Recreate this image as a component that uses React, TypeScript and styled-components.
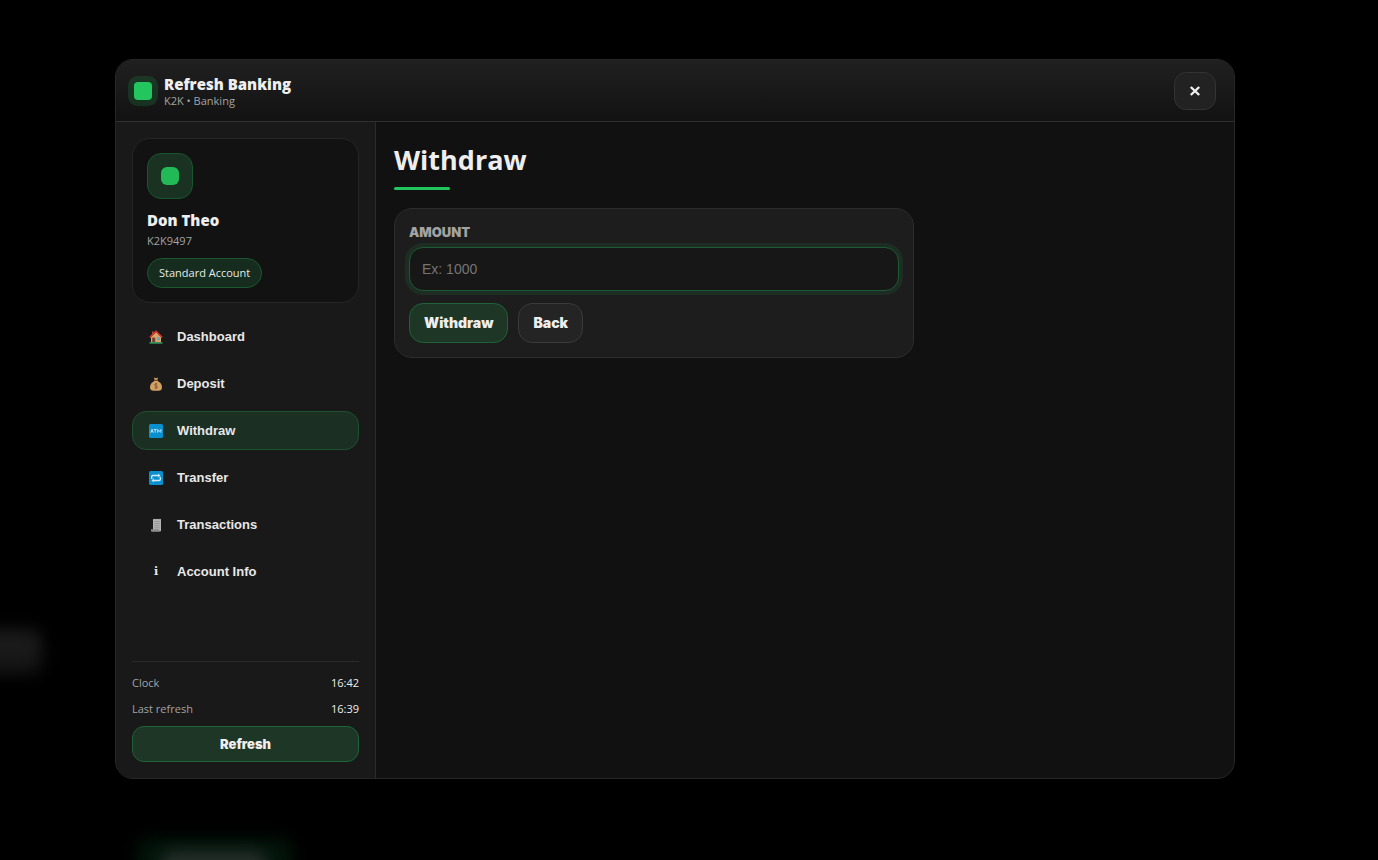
import React from "react";
import styled, { createGlobalStyle, css } from "styled-components";

const uiFont = '"Open Sans", "Noto Sans", sans-serif';
const controlFont = '"Liberation Sans", Arial, sans-serif';
const blackFont = 'Inter, Roboto, "Liberation Sans", sans-serif';

const GlobalStyle = createGlobalStyle`
  *, *::before, *::after { box-sizing: border-box; }
  body {
    margin: 0;
    background: #000;
    color: #eee;
    font-family: ${uiFont};
  }
`;

const Page = styled.div`
  position: relative;
  display: flex;
  align-items: center;
  justify-content: center;
  min-height: 100vh;
  padding: 20px 48px 42px 20px;
  overflow: hidden;
`;

const Haze = styled.div`
  position: absolute;
  border-radius: 12px;
  filter: blur(8px);
`;

const GreyHaze = styled(Haze)`
  left: -60px;
  top: 630px;
  width: 102px;
  height: 44px;
  background: linear-gradient(#1e1e1e, #131313);
`;

const GreenHaze = styled(Haze)`
  left: 138px;
  top: 838px;
  width: 154px;
  height: 60px;
  background: #03150b;
`;

const LightHaze = styled(Haze)`
  left: 162px;
  top: 852px;
  width: 104px;
  height: 30px;
  background: #28302c;
`;

const Window = styled.div`
  position: relative;
  display: flex;
  flex-direction: column;
  width: 100%;
  max-width: 1120px;
  min-height: 720px;
  border: 1px solid #272727;
  border-radius: 18px;
  background: #111;
  overflow: hidden;
`;

const Header = styled.header`
  display: flex;
  align-items: center;
  justify-content: space-between;
  min-height: 62px;
  padding: 0 18px;
  border-bottom: 1px solid #303030;
  background: linear-gradient(#202020, #121212);
`;

const Brand = styled.div`
  display: flex;
  align-items: center;
  gap: 12px;
`;

const BrandMark = styled.span`
  width: 18px;
  height: 18px;
  border-radius: 4px;
  background: #22c55e;
  box-shadow: 0 0 0 6px rgba(34, 197, 94, 0.16);
`;

const BrandName = styled.div`
  font-size: 15px;
  font-weight: 800;
  line-height: 20px;
`;

const BrandSub = styled.div`
  font-size: 11px;
  line-height: 14px;
  color: #a3a3a3;
`;

const CloseButton = styled.button`
  display: flex;
  align-items: center;
  justify-content: center;
  width: 42px;
  height: 38px;
  padding: 0;
  border: 1px solid #333;
  border-radius: 12px;
  background: #222;
  color: #eee;
`;

const Body = styled.div`
  display: flex;
  flex: 1;
`;

const Sidebar = styled.aside`
  display: flex;
  flex-direction: column;
  flex: none;
  width: 260px;
  padding: 16px;
  border-right: 1px solid #2a2a2a;
  background: #191919;
`;

const Profile = styled.section`
  display: flex;
  flex-direction: column;
  align-items: flex-start;
  padding: 14px;
  border: 1px solid #262626;
  border-radius: 18px;
  background: #121212;
`;

const Avatar = styled.div`
  display: flex;
  align-items: center;
  justify-content: center;
  width: 46px;
  height: 46px;
  border: 1px solid #1a5530;
  border-radius: 14px;
  background: #193222;

  &::after {
    content: "";
    width: 18px;
    height: 18px;
    border-radius: 6px;
    background: #22b957;
  }
`;

const ProfileName = styled.div`
  margin-top: 11px;
  font-size: 15px;
  font-weight: 800;
  line-height: 20px;
`;

const ProfileId = styled.div`
  margin-top: 3px;
  font-size: 11px;
  line-height: 16px;
  color: #a3a3a3;
`;

const Pill = styled.span`
  margin-top: 9px;
  padding: 0 11px;
  border: 1px solid #1b572f;
  border-radius: 15px;
  background: #162c1e;
  font-size: 11px;
  line-height: 28px;
  color: #e4ebe6;
`;

const Nav = styled.nav`
  display: flex;
  flex-direction: column;
  gap: 8px;
  margin-top: 14px;
`;

const NavButton = styled.button<{ $active?: boolean }>`
  display: flex;
  align-items: center;
  gap: 12px;
  height: 39px;
  padding: 0 14px;
  border: 1px solid ${(p) => (p.$active ? "#1e512f" : "transparent")};
  border-radius: 14px;
  background: ${(p) => (p.$active ? "#1b2f22" : "transparent")};
  font: bold 13px/16px ${controlFont};
  color: #e8e8e8;
`;

const NavIcon = styled.span`
  display: flex;
  align-items: center;
  justify-content: center;
  width: 18px;
  height: 18px;
  font: bold 11px/18px "DejaVu Serif", serif;
`;

const Footer = styled.footer`
  display: flex;
  flex-direction: column;
  gap: 8px;
  margin-top: auto;
  padding-top: 12px;
  border-top: 1px solid #2b2b2b;
`;

const StatusRow = styled.div`
  display: flex;
  justify-content: space-between;
  font-size: 11px;
  line-height: 18px;
  color: #a3a3a3;
`;

const StatusTime = styled.span`
  font-weight: 500;
  color: #eee;
`;

const green = css`
  border-color: #1e6337;
  background: #1d3626;
`;

const Button = styled.button<{ $primary?: boolean }>`
  height: 40px;
  padding: 0 14px;
  border: 1px solid #3a3a3a;
  border-radius: 14px;
  background: #242424;
  font: 900 14px/18px ${blackFont};
  color: #eee;
  ${(p) => p.$primary && green}
`;

const RefreshButton = styled(Button)`
  height: 36px;
  border-radius: 12px;
  font-size: 13px;
`;

const Main = styled.main`
  flex: 1;
  min-width: 0;
  padding: 18px;
`;

const Title = styled.h1`
  margin: 0;
  font-size: 27px;
  font-weight: 700;
  line-height: 40px;

  &::after {
    content: "";
    display: block;
    width: 56px;
    height: 3px;
    margin-top: 7px;
    border-radius: 2px;
    background: #22c55e;
  }
`;

const FormCard = styled.form`
  display: flex;
  flex-direction: column;
  max-width: 520px;
  margin-top: 18px;
  padding: 14px;
  border: 1px solid #2d2d2d;
  border-radius: 18px;
  background: #1d1d1d;
`;

const Label = styled.label`
  font: 900 13px/18px ${blackFont};
  text-transform: uppercase;
  color: #a3a3a3;
`;

const AmountInput = styled.input`
  height: 44px;
  margin: 6px 0 12px;
  padding: 0 12px;
  border: 1px solid #1b5b33;
  border-radius: 14px;
  outline: none;
  background: #171717;
  box-shadow: 0 0 0 4px #1e2d23;
  font: 14px/18px ${controlFont};
  color: #eee;

  &::placeholder {
    color: #757575;
    opacity: 1;
  }
`;

const Actions = styled.div`
  display: flex;
  gap: 10px;
`;

const HouseIcon = () => (
  <svg width="14" height="14" viewBox="0 0 14 14" aria-hidden="true">
    <path d="M3 1.5h1.6v3H3z" fill="#b5493a" />
    <path d="M2 7l5-5 5 5v5.4H2z" fill="#d9a566" />
    <path d="M.8 7.4L7 1.2l6.2 6.2" fill="none" stroke="#d8362f" strokeWidth="1.5" />
    <path d="M3.2 7.6h3v4.8h-3z" fill="#6d4130" />
    <path d="M8 7.2h3v2.9H8z" fill="#5ba7dc" />
    <path d="M.5 12.2h13v1.5H.5z" fill="#2d9c62" />
  </svg>
);

const MoneyBagIcon = () => (
  <svg width="14" height="14" viewBox="0 0 14 14" aria-hidden="true">
    <path d="M5 .6l2 .6 2-.6-.8 2.8H5.8z" fill="#d3a063" />
    <path
      d="M5.4 4h3.2c2.7 1.4 4.4 3.500 4.400 5.900 0 2.600-1.400 3.800-3.500 3.800h-5C2.400 13.700 1 12.500 1 9.900 1 7.500 2.700 5.400 5.400 4z"
      fill="#d3a063"
    />
    <path d="M5.2 3.400h3.600" stroke="#744c32" strokeWidth="1.2" />
    <path
      d="M8.500 7.200C7.700 6.500 5.600 6.600 5.600 7.900s2.900.9 2.900 2.200-2.200 1.300-3 .5M7 5.800v6.200"
      fill="none"
      stroke="#805535"
      strokeWidth=".9"
    />
  </svg>
);

const AtmIcon = () => (
  <svg width="14" height="14" viewBox="0 0 14 14" aria-hidden="true">
    <rect width="14" height="14" rx="1.5" fill="#0a8fcf" />
    <path
      d="M1.700 8.700L3 5.300l1.300 3.400M2.200 7.700h1.600M4.700 5.500h3M6.200 5.500v3.200M8.700 8.700V5.500l1.600 2.200 1.600-2.200v3.200"
      fill="none"
      stroke="#c7e8f7"
      strokeWidth=".9"
    />
  </svg>
);

const RepeatIcon = () => (
  <svg width="14" height="14" viewBox="0 0 14 14" aria-hidden="true">
    <rect width="14" height="14" rx="1.5" fill="#0a8fcf" />
    <path
      d="M2.700 8V5.600c0-.7.400-1.100 1.100-1.100h6M11.300 6v2.400c0 .7-.4 1.100-1.100 1.100h-6"
      fill="none"
      stroke="#d5ecf7"
      strokeWidth="1.300"
    />
    <path d="M9.200 2.600l2.300 1.900-2.300 1.900zM4.800 7.600L2.500 9.500l2.300 1.900z" fill="#d5ecf7" />
  </svg>
);

const ReceiptIcon = () => (
  <svg width="14" height="14" viewBox="0 0 14 14" aria-hidden="true">
    <path d="M4 .8l1 .5 1-.5 1 .5 1-.5 1 .5 1-.5 1 .5 1-.5v12.400H4z" fill="#b4b4b4" />
    <path d="M5.300 3.500h5.400M5.300 5.600h5.400M5.300 7.700h5.400M5.300 9.800h5.400" stroke="#8d8d8d" strokeWidth=".8" />
    <path d="M2 11.300h8.300v1.100c0 .7.400 1.300 1 1.300H3.300c-.8 0-1.300-.6-1.300-1.300z" fill="#8a8a8a" />
  </svg>
);

const CloseIcon = () => (
  <svg width="12" height="12" viewBox="0 0 12 12" aria-hidden="true">
    <path d="M1.800 2l8.400 8M10.200 2L1.800 10" stroke="currentColor" strokeWidth="2.400" />
  </svg>
);

const navItems: { label: string; icon: React.ReactNode }[] = [
  { label: "Dashboard", icon: <HouseIcon /> },
  { label: "Deposit", icon: <MoneyBagIcon /> },
  { label: "Withdraw", icon: <AtmIcon /> },
  { label: "Transfer", icon: <RepeatIcon /> },
  { label: "Transactions", icon: <ReceiptIcon /> },
  { label: "Account Info", icon: "i" },
];

export default function App() {
  return (
    <>
      <GlobalStyle />
      <Page>
        <GreyHaze />
        <GreenHaze />
        <LightHaze />
        <Window>
          <Header>
            <Brand>
              <BrandMark />
              <div>
                <BrandName>Refresh Banking</BrandName>
                <BrandSub>K2K • Banking</BrandSub>
              </div>
            </Brand>
            <CloseButton type="button" aria-label="Close">
              <CloseIcon />
            </CloseButton>
          </Header>
          <Body>
            <Sidebar>
              <Profile>
                <Avatar />
                <ProfileName>Don Theo</ProfileName>
                <ProfileId>K2K9497</ProfileId>
                <Pill>Standard Account</Pill>
              </Profile>
              <Nav>
                {navItems.map(({ label, icon }) => (
                  <NavButton key={label} type="button" $active={label === "Withdraw"}>
                    <NavIcon aria-hidden="true">{icon}</NavIcon>
                    {label}
                  </NavButton>
                ))}
              </Nav>
              <Footer>
                <StatusRow>
                  Clock <StatusTime>16:42</StatusTime>
                </StatusRow>
                <StatusRow>
                  Last refresh <StatusTime>16:39</StatusTime>
                </StatusRow>
                <RefreshButton type="button" $primary>
                  Refresh
                </RefreshButton>
              </Footer>
            </Sidebar>
            <Main>
              <Title>Withdraw</Title>
              <FormCard onSubmit={(e) => e.preventDefault()}>
                <Label htmlFor="amount">Amount</Label>
                <AmountInput id="amount" inputMode="numeric" placeholder="Ex: 1000" />
                <Actions>
                  <Button type="submit" $primary>
                    Withdraw
                  </Button>
                  <Button type="button">Back</Button>
                </Actions>
              </FormCard>
            </Main>
          </Body>
        </Window>
      </Page>
    </>
  );
}
